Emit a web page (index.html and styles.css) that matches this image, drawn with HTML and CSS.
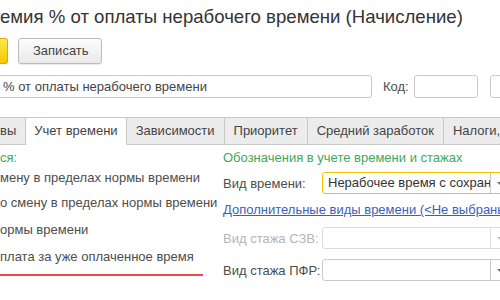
FILE: index.html
```html
<!DOCTYPE html>
<html lang="ru">
<head>
<meta charset="UTF-8">
<title>Начисление</title>
<link rel="stylesheet" href="styles.css">
</head>
<body>
<div class="page">
    <h1 class="title">емия % от оплаты нерабочего времени (Начисление)</h1>
    <div class="toolbar">
        <div class="btn btn-main"></div>
        <div class="btn">Записать</div>
    </div>
    <div class="name-row">
        <div class="field name-field">% от оплаты нерабочего времени</div>
        <span class="code-label">Код:</span>
        <div class="field code-field"></div>
        <div class="field extra-field"></div>
    </div>
    <div class="tabs">
        <div class="tab first">вы</div>
        <div class="tab active">Учет времени</div>
        <div class="tab">Зависимости</div>
        <div class="tab">Приоритет</div>
        <div class="tab">Средний заработок</div>
        <div class="tab">Налоги, взносы</div>
    </div>
    <div class="content">
        <div class="left">
            <div class="group-title">ся:</div>
            <div class="row r1">мену в пределах нормы времени</div>
            <div class="row r2">о смену в пределах нормы времени</div>
            <div class="row r3">ормы времени</div>
            <div class="row r4">плата за уже оплаченное время</div>
            <div class="red-line"></div>
        </div>
        <div class="right">
            <div class="group-title">Обозначения в учете времени и стажах</div>
            <div class="form-row sel-row">
                <span class="lbl">Вид времени:</span>
                <div class="select focused">
                    <span class="select-text">Нерабочее время с сохранением оплаты</span>
                    <span class="drop"></span>
                </div>
            </div>
            <a class="link" href="#">Дополнительные виды времени (&lt;Не выбраны&gt;)</a>
            <div class="form-row szv-row">
                <span class="lbl disabled">Вид стажа СЗВ:</span>
                <div class="select disabled-field">
                    <span class="select-text"></span>
                    <span class="drop"></span>
                </div>
            </div>
            <div class="form-row pfr-row">
                <span class="lbl">Вид стажа ПФР:</span>
                <div class="select">
                    <span class="select-text"></span>
                    <span class="drop"></span>
                </div>
            </div>
        </div>
    </div>
</div>
</body>
</html>
```

FILE: styles.css
```css
*{
    margin:0;
    padding:0;
    box-sizing:border-box;
}
html,body{
    width:500px;
    height:300px;
    overflow:hidden;
    background:#fff;
}
body{
    font-family:"Liberation Sans",Arial,sans-serif;
    font-size:13px;
    color:#4d4d4d;
}
.page{
    width:500px;
    overflow:hidden;
}
.title{
    font-size:18.6px;
    font-weight:normal;
    color:#333;
    line-height:24px;
    padding-top:5px;
    margin-bottom:9px;
    white-space:nowrap;
}
/* кнопки */
.toolbar{
    display:flex;
    gap:10px;
    height:26px;
}
.btn{
    height:26px;
    padding:0 14px;
    line-height:24px;
    border:1px solid #bcbcbc;
    border-radius:3px;
    background:linear-gradient(#fdfdfd,#e9e9e9);
    color:#444;
    box-shadow:0 1px 1px rgba(0,0,0,.08);
    width:84px;
    text-align:center;
}
.btn-main{
    width:8px;
    padding:0;
    border:1px solid #d4ae00;
    border-left:none;
    border-radius:0 3px 3px 0;
    background:linear-gradient(#ffe64d,#f5c800);
}
/* наименование и код */
.name-row{
    display:flex;
    align-items:center;
    margin-top:11px;
    height:23px;
}
.name-row > *{
    flex-shrink:0;
}
.field{
    height:23px;
    border:1px solid #c9c9c9;
    border-radius:3px;
    background:#fff;
    line-height:21px;
    padding-left:4px;
    white-space:nowrap;
}
.name-field{
    width:375px;
    margin-left:-3px;
    padding-left:5px;
    color:#444;
}
.code-label{
    margin-left:11px;
    width:31px;
}
.code-field{
    width:64px;
}
.extra-field{
    width:40px;
    margin-left:12px;
}
/* закладки */
.tabs{
    display:flex;
    margin-top:19px;
    height:28px;
    border-bottom:1px solid #c8c8c8;
    white-space:nowrap;
}
.tab{
    height:28px;
    padding:0 9px;
    line-height:26px;
    background:#ececec;
    border:1px solid #c8c8c8;
    border-left:none;
    color:#444;
    flex-shrink:0;
}
.tab.first{
    padding-left:0;
    border-right:1px solid #c8c8c8;
}
.tab.active{
    background:#fff;
    border-bottom:1px solid #fff;
    padding:0 8px;
}
/* содержимое */
.content{
    display:grid;
    grid-template-columns:223px 300px;
}
.group-title{
    color:#3fa85a;
    line-height:16px;
    margin-top:5px;
    white-space:nowrap;
}
.left{
    display:flex;
    flex-direction:column;
}
.row{
    line-height:16px;
    white-space:nowrap;
}
.r1{margin-top:4px;}
.r2{margin-top:9px;}
.r3{margin-top:11px;}
.r4{margin-top:11px;}
.red-line{
    width:203px;
    height:2px;
    background:#e84a4a;
    margin-top:9px;
}
.right{
    display:flex;
    flex-direction:column;
}
.form-row{
    display:flex;
    align-items:center;
}
.lbl{
    width:99px;
    flex-shrink:0;
    white-space:nowrap;
}
.lbl.disabled{
    color:#b4b4b4;
}
.sel-row{margin-top:6px;}
.szv-row{margin-top:9px;}
.pfr-row{margin-top:10px;}
.select{
    display:flex;
    width:187px;
    height:22px;
    border:1px solid #c9c9c9;
    border-radius:3px;
    background:#fff;
    flex-shrink:0;
}
.select.focused{
    border-color:#f3c200;
}
.select.disabled-field{
    border-color:#dcdcdc;
}
.select-text{
    flex:1;
    overflow:hidden;
    white-space:nowrap;
    padding-left:5px;
    line-height:20px;
    color:#333;
}
.drop{
    width:18px;
    border-left:1px solid #c9c9c9;
    position:relative;
}
.drop:after{
    content:"";
    position:absolute;
    left:6px;
    top:9px;
    border-left:3px solid transparent;
    border-right:3px solid transparent;
    border-top:3px solid #666;
}
.disabled-field .drop{
    border-left-color:#e2e2e2;
}
.disabled-field .drop:after{
    border-top-color:#bbb;
}
.link{
    color:#3c5fb8;
    text-decoration:underline;
    line-height:16px;
    margin-top:8px;
    white-space:nowrap;
}
```
